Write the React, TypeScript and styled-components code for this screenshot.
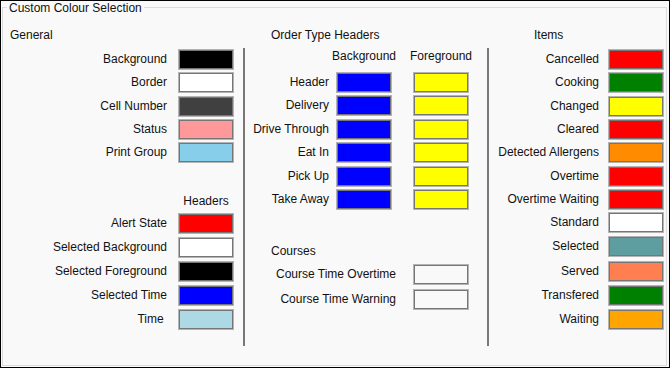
import React, { FC } from 'react';
import styled, { createGlobalStyle } from 'styled-components';

const GlobalStyle = createGlobalStyle`
  * {
    box-sizing: border-box;
  }
  body {
    margin: 0;
    background: #f9f9f9;
    font-family: 'Liberation Sans', Arial, sans-serif;
    font-size: 12px;
    color: #111;
  }
`;

const Frame = styled.div`
  width: 670px;
  height: 368px;
  border: 1px solid #000;
  background: #f9f9f9;
`;

const Group = styled.fieldset`
  margin: -1px 2px 1px 1px;
  padding: 0;
  height: 366px;
  border: 1px solid #dcdcdc;
  min-width: 0;
`;

const Legend = styled.legend`
  margin-left: 4px;
  padding: 2px 2px 0;
  line-height: 13px;
`;

const Columns = styled.div`
  display: grid;
  grid-template-columns: 240px 246px 177px;
  grid-template-rows: 33px 298px;
`;

const Title = styled.div<{ $indent: number }>`
  padding: 13px 0 0 ${({ $indent }) => $indent}px;
  line-height: 14px;
  white-space: nowrap;
`;

const Panel = styled.div<{ $divided?: boolean; $right: number; $top: number }>`
  display: flex;
  flex-direction: column;
  padding-top: ${({ $top }) => $top}px;
  padding-right: ${({ $right }) => $right}px;
  border-left: ${({ $divided }) => ($divided ? '2px solid #777' : 'none')};
  border-right: ${({ $divided }) => ($divided ? '2px solid #777' : 'none')};
`;

const Stack = styled.div<{ $gap: number; $before?: number }>`
  display: flex;
  flex-direction: column;
  gap: ${({ $gap }) => $gap}px;
  margin-top: ${({ $before }) => $before ?? 0}px;
`;

const Row = styled.div<{ $gap: number }>`
  display: flex;
  justify-content: flex-end;
  align-items: center;
  gap: ${({ $gap }) => $gap}px;
  height: 21px;
`;

const HeadingRow = styled.div<{ $gap: number; $before?: number }>`
  display: flex;
  justify-content: flex-end;
  gap: ${({ $gap }) => $gap}px;
  height: 14px;
  line-height: 14px;
  margin-top: ${({ $before }) => $before ?? 0}px;
`;

const SectionLabel = styled.div<{ $before: number; $indent: number }>`
  margin: ${({ $before }) => $before}px 0 0 ${({ $indent }) => $indent}px;
  line-height: 14px;
  height: 14px;
`;

const Label = styled.span`
  white-space: nowrap;
  line-height: 21px;
`;

const SwatchHeading = styled.div`
  width: 56px;
  display: flex;
  justify-content: center;
  white-space: nowrap;
`;

const Swatch = styled.div<{ $color?: string }>`
  flex: none;
  width: 56px;
  height: 21px;
  background: ${({ $color }) => $color ?? 'transparent'};
  border: 1px solid #b4b4b4;
  box-shadow: inset 0 0 0 1px #767676;
`;

const SwatchPair = styled.div`
  display: flex;
  gap: 21px;
`;

type Entry = [string, string?];

const general: Entry[] = [
  ['Background', '#000000'],
  ['Border', '#ffffff'],
  ['Cell Number', '#404040'],
  ['Status', '#ff9999'],
  ['Print Group', '#87ceeb'],
];

const headers: Entry[] = [
  ['Alert State', '#ff0000'],
  ['Selected Background', '#ffffff'],
  ['Selected Foreground', '#000000'],
  ['Selected Time', '#0000ff'],
  ['Time\u00a0', '#add8e6'],
];

const orderTypes = ['Header', 'Delivery', 'Drive Through', 'Eat In', 'Pick Up', 'Take Away'];

const courses: Entry[] = [['Course Time Overtime'], ['Course Time Warning']];

const items: Entry[] = [
  ['Cancelled', '#ff0000'],
  ['Cooking', '#008000'],
  ['Changed', '#ffff00'],
  ['Cleared', '#ff0000'],
  ['Detected Allergens', '#ff8c00'],
  ['Overtime', '#ff0000'],
  ['Overtime Waiting', '#ff0000'],
  ['Standard', '#ffffff'],
  ['Selected', '#5f9ea0'],
  ['Served', '#ff7f50'],
  ['Transfered', '#008000'],
  ['Waiting', '#ffa500'],
];

interface ColourListProps {
  entries: Entry[];
  gap: number;
  labelGap: number;
  before?: number;
}

const ColourList: FC<ColourListProps> = ({ entries, gap, labelGap, before }) => (
  <Stack $gap={gap} $before={before}>
    {entries.map(([label, color]) => (
      <Row key={label} $gap={labelGap}>
        <Label>{label}</Label>
        <Swatch $color={color} />
      </Row>
    ))}
  </Stack>
);

const App: FC = () => (
  <>
    <GlobalStyle />
    <Frame>
      <Group>
        <Legend>Custom Colour Selection</Legend>
        <Columns>
          <Title $indent={7}>General</Title>
          <Title $indent={28}>Order Type Headers</Title>
          <Title $indent={45}>Items</Title>

          <Panel $right={9} $top={1}>
            <ColourList entries={general} gap={2.33} labelGap={11} />
            <HeadingRow $gap={0} $before={30.5}>
              <SwatchHeading>Headers</SwatchHeading>
            </HeadingRow>
            <ColourList entries={headers} gap={3.15} labelGap={11} before={4.9} />
          </Panel>

          <Panel $divided $right={18} $top={0.8}>
            <HeadingRow $gap={21}>
              <SwatchHeading>Background</SwatchHeading>
              <SwatchHeading>Foreground</SwatchHeading>
            </HeadingRow>
            <Stack $gap={2.47} $before={9.2}>
              {orderTypes.map((name) => (
                <Row key={name} $gap={7}>
                  <Label>{name}</Label>
                  <SwatchPair>
                    <Swatch $color="#0000ff" />
                    <Swatch $color="#ffff00" />
                  </SwatchPair>
                </Row>
              ))}
            </Stack>
            <SectionLabel $before={33.5} $indent={26}>
              Courses
            </SectionLabel>
            <ColourList entries={courses} gap={3.4} labelGap={17} before={6.5} />
          </Panel>

          <Panel $right={2} $top={1}>
            <ColourList entries={items.slice(0, 8)} gap={2.33} labelGap={9} />
            <ColourList entries={items.slice(8)} gap={3.15} labelGap={9} before={3.15} />
          </Panel>
        </Columns>
      </Group>
    </Frame>
  </>
);

export default App;
